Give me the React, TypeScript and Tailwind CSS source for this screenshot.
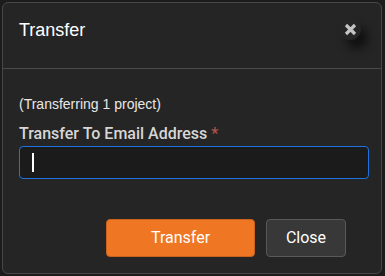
import React from "react";

export default function App() {
  return (
    <div className="w-[385px] h-[276px] bg-[#1c1c1c] p-[2px] box-border" style={{ fontFamily: "'Liberation Sans', Arial, sans-serif" }}>
      <div className="w-[380px] h-[272px] bg-[#252525] border border-[#464646] rounded-[6px] flex flex-col box-border">
        <div className="h-[66px] flex items-start justify-between border-b border-[#4a4a4a] pl-[16px] pr-[20px] pt-[15px] relative">
          <h2 className="text-[18px] leading-[24px] text-white m-0">Transfer</h2>
          <button className="relative mt-[0px] w-[22px] h-[22px] flex items-center justify-center bg-transparent rounded-full shadow-[7px_9px_10px_rgba(0,0,0,0.55)]">
            <svg width="13" height="13" viewBox="0 0 13 13">
              <path d="M2 2 L11 11 M11 2 L2 11" stroke="#c4c4c4" strokeWidth="3.2" strokeLinecap="butt" />
            </svg>
          </button>
        </div>
        <div className="px-[16px] pt-[26px] flex flex-col">
          <p className="text-[14px] leading-[18px] text-[#e8e8e8] m-0">(Transferring 1 project)</p>
          <label className="mt-[12px] text-[16px] leading-[18px] font-medium text-[#d6d6d6]" style={{ fontFamily: "Roboto, sans-serif" }}>
            Transfer To Email Address <span className="text-[#b2524c]">*</span>
          </label>
          <div className="mt-[3px] w-[350px] h-[33px] rounded-[4px] border border-[#1e73e0] bg-[#1b1b1b] flex items-center pl-[12px]">
            <div className="w-[1.5px] h-[19px] bg-white" />
          </div>
        </div>
        <div className="flex justify-end gap-[11px] pr-[35px] mt-[40px]" style={{ fontFamily: "Roboto, sans-serif" }}>
          <button className="w-[149px] h-[38px] rounded-[4px] bg-[#ef7622] border border-[#c9621d] text-white text-[16px]">Transfer</button>
          <button className="w-[80px] h-[38px] rounded-[4px] bg-[#383838] border border-[#595959] text-white text-[16px]">Close</button>
        </div>
      </div>
    </div>
  );
}
